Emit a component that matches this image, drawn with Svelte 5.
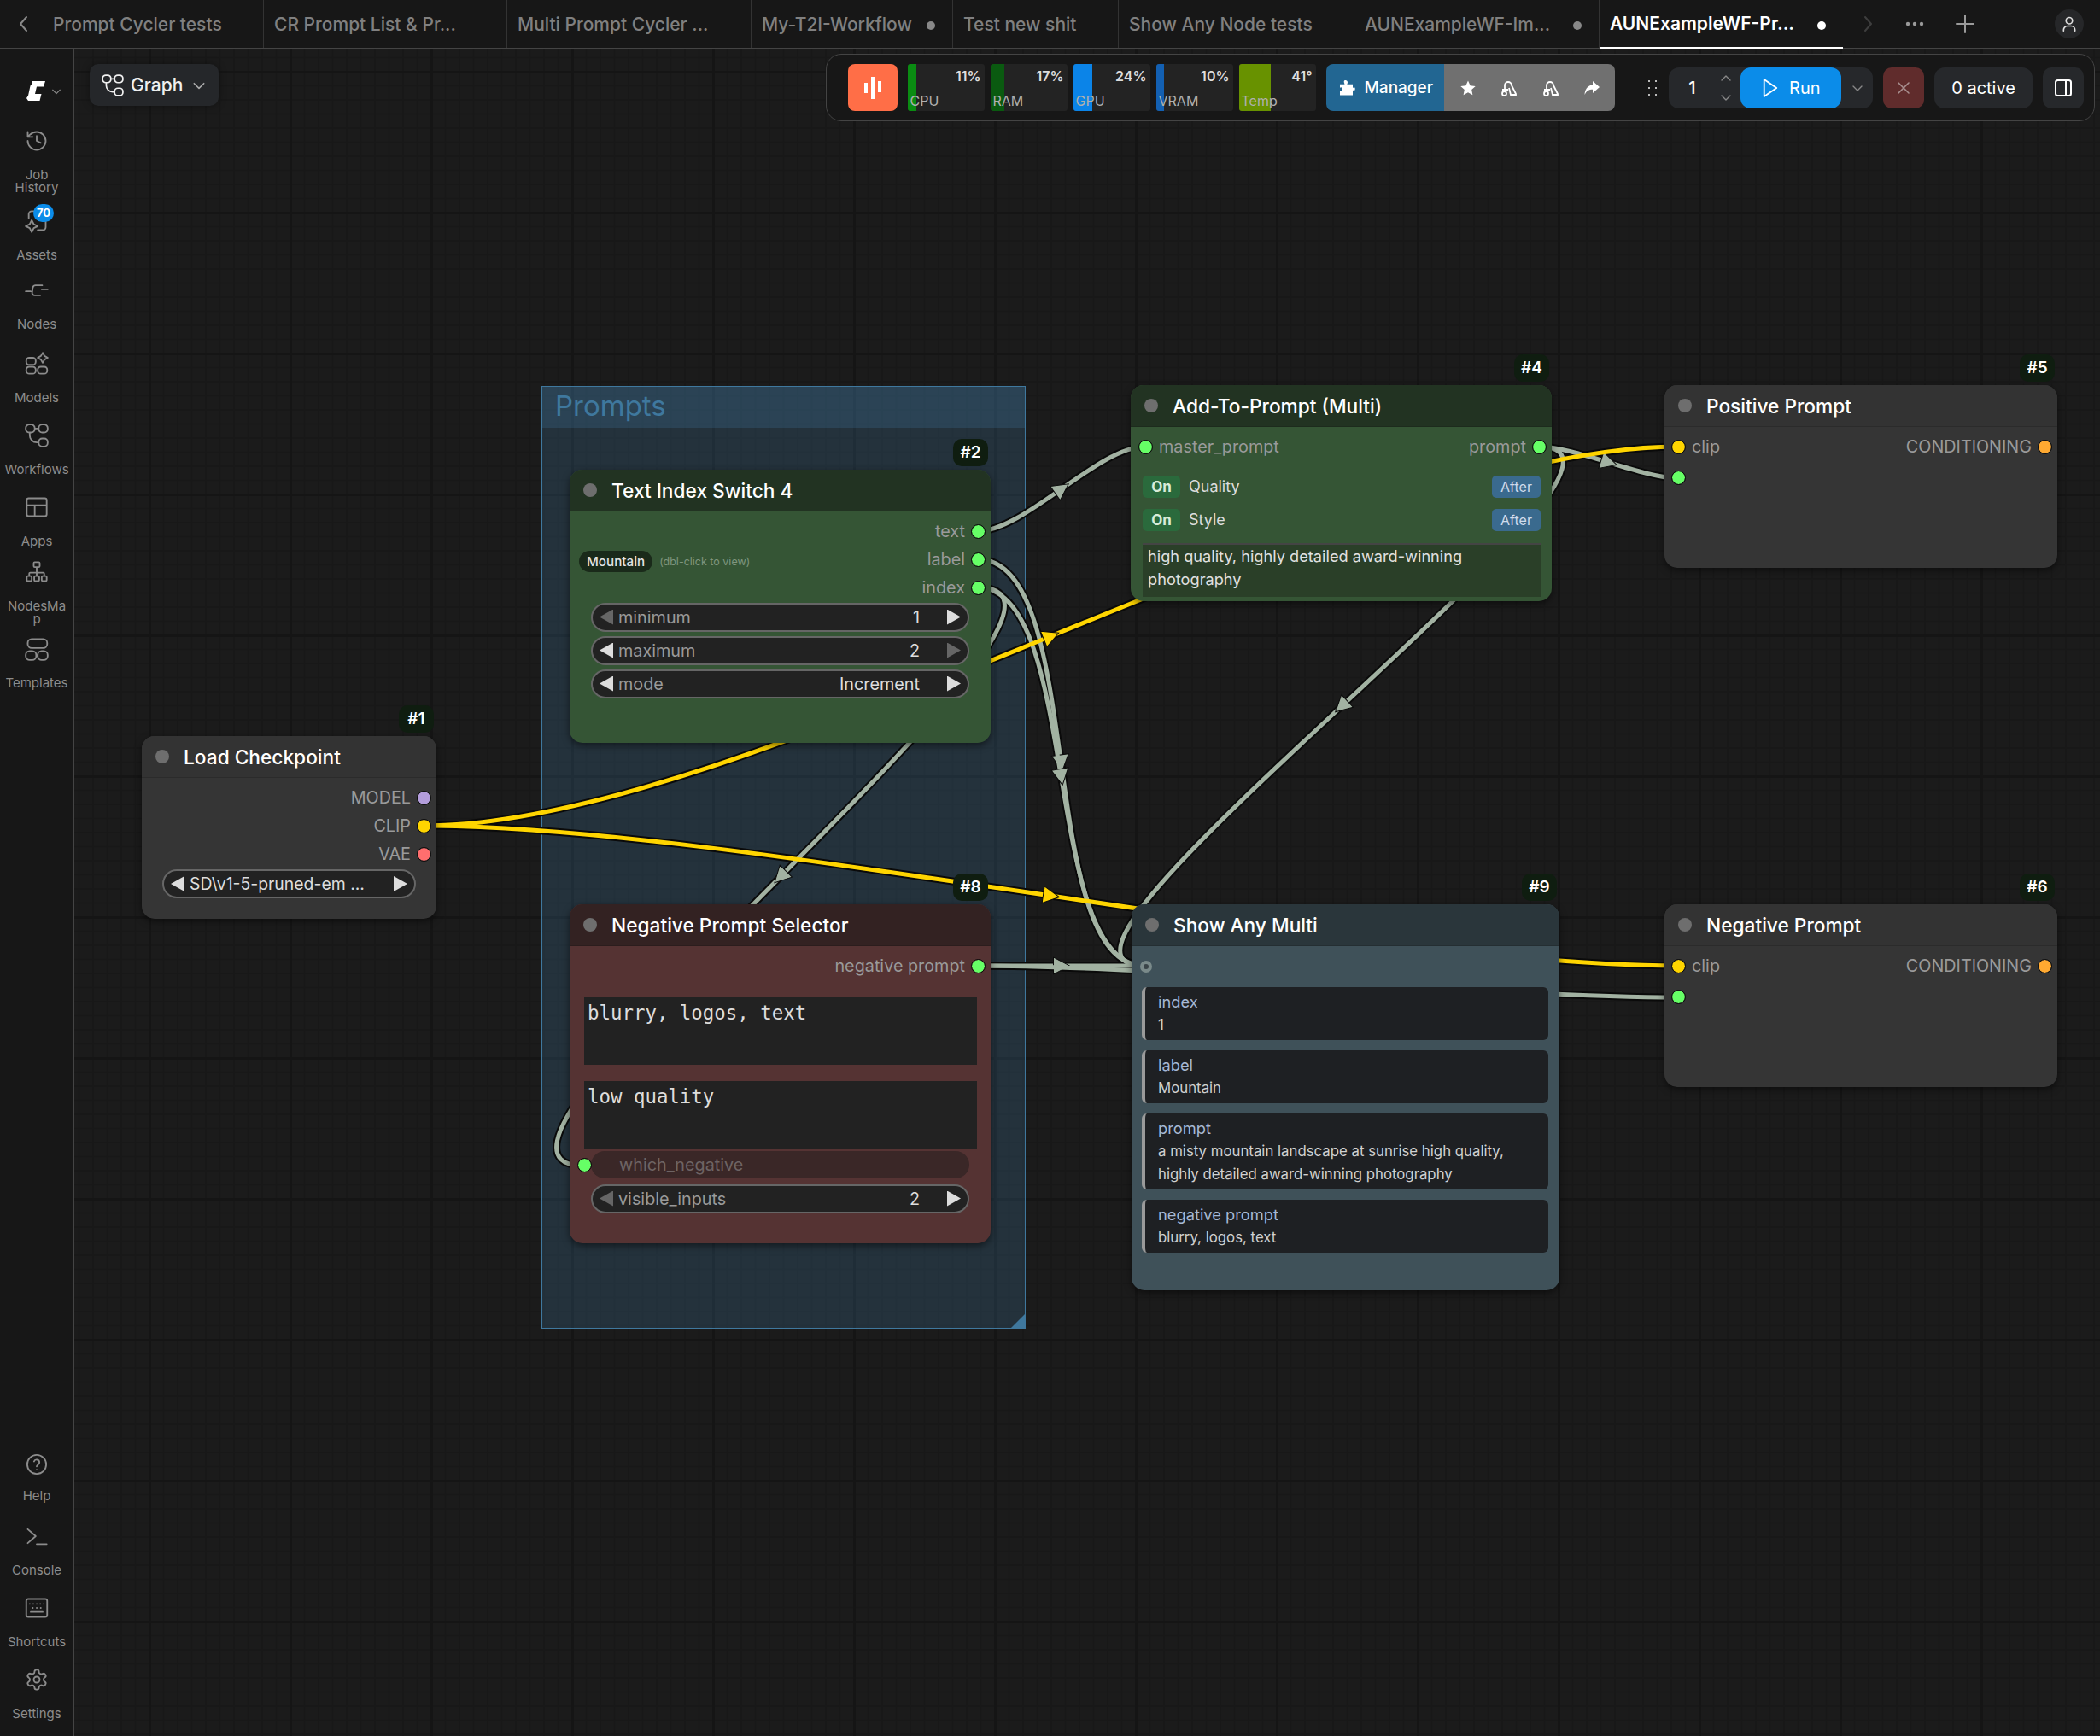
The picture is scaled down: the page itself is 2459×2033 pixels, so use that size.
<script lang="ts">
  // rounded rect as path data, so every icon can be one d string
  const rr = (x: number, y: number, w: number, h: number, r: number) =>
    `M${x + r} ${y}h${w - 2 * r}a${r} ${r} 0 0 1 ${r} ${r}v${h - 2 * r}a${r} ${r} 0 0 1 -${r} ${r}h-${w - 2 * r}a${r} ${r} 0 0 1 -${r} -${r}v-${h - 2 * r}a${r} ${r} 0 0 1 ${r} -${r}z`;

  const icons: Record<string, string> = {
    history: 'M3 12a9 9 0 1 0 9-9 9.75 9.75 0 0 0-6.74 2.74L3 8M3 3v5h5M12 7v5l4 2',
    assets: 'M4 9V5a3 3 0 0 1 3-3h11a3 3 0 0 1 3 3v13a3 3 0 0 1-3 3h-5M7 11l2 4 4 2-4 2-2 4-2-4-4-2 4-2z',
    nodes: 'M1 13h5M17 11h6M17.5 7H11a3 3 0 0 0-3 2.5l-.6 4.5a2.6 2.6 0 0 0 2.6 3h5.5',
    models: rr(1.5, 15, 9.5, 7, 3) + rr(13, 15, 9.5, 7, 3) + rr(1.5, 6, 9.5, 7, 3) + 'M18 1l1.8 3.2 3.2 1.800-3.200 1.800-1.800 3.200-1.800-3.200-3.200-1.800 3.200-1.800z',
    workflows: rr(1, 1, 9, 8, 3.5) + rr(14, 1, 9, 8, 3.5) + rr(14, 15, 9, 8, 3.5) + 'M10 5h4M5 9v3a7 7 0 0 0 7 7h2',
    apps: rr(2, 3, 20, 18, 2) + 'M2 10h20M10 10v11',
    network: rr(9, 2, 6, 5, 1) + rr(2, 16, 5, 5, 1) + rr(9.5, 16, 5, 5, 1) + rr(17, 16, 5, 5, 1) + 'M12 7v9M4.5 16v-2.5a1 1 0 0 1 1-1h13a1 1 0 0 1 1 1V16',
    templates: rr(3, 2, 19.5, 9, 4) + rr(1, 14, 10.5, 9, 4) + rr(13, 14, 10, 9, 4),
    help: 'M21.5 12a9.5 9.5 0 1 1-19 0 9.5 9.5 0 0 1 19 0zM9.3 9a2.8 2.8 0 0 1 5.4 1c0 1.9-2.7 2.6-2.7 4M12 17.2v.1',
    console: 'M3 5l8 7-8 7M12 20h10',
    keyboard: rr(1.5, 3, 21, 18, 2) + 'M5 8h.1M8.5 8h.1M12 8h.1M15.5 8h.1M19 8h.1M8 12h.1M12 12h.1M16 12h.1M6 16h12',
    settings: 'M12.22 2h-.44a2 2 0 0 0-2 2v.18a2 2 0 0 1-1 1.73l-.43.25a2 2 0 0 1-2 0l-.15-.08a2 2 0 0 0-2.73.73l-.22.38a2 2 0 0 0 .73 2.73l.15.1a2 2 0 0 1 1 1.72v.51a2 2 0 0 1-1 1.74l-.15.09a2 2 0 0 0-.73 2.73l.22.38a2 2 0 0 0 2.73.73l.15-.08a2 2 0 0 1 2 0l.43.25a2 2 0 0 1 1 1.73V20a2 2 0 0 0 2 2h.44a2 2 0 0 0 2-2v-.18a2 2 0 0 1 1-1.73l.43-.25a2 2 0 0 1 2 0l.15.08a2 2 0 0 0 2.73-.73l.22-.39a2 2 0 0 0-.73-2.73l-.15-.08a2 2 0 0 1-1-1.74v-.5a2 2 0 0 1 1-1.74l.15-.09a2 2 0 0 0 .73-2.73l-.22-.38a2 2 0 0 0-2.73-.73l-.15.08a2 2 0 0 1-2 0l-.43-.25a2 2 0 0 1-1-1.73V4a2 2 0 0 0-2-2zM15 12a3 3 0 1 1-6 0 3 3 0 0 1 6 0z',
  };

  const tabs = [
    { name: 'Prompt Cycler tests', w: 259 },
    { name: 'CR Prompt List & Pr...', w: 285 },
    { name: 'Multi Prompt Cycler ...', w: 286 },
    { name: 'My-T2I-Workflow', w: 236, dirty: true },
    { name: 'Test new shit', w: 194 },
    { name: 'Show Any Node tests', w: 276 },
    { name: 'AUNExampleWF-Im...', w: 287, dirty: true },
    { name: 'AUNExampleWF-Pr...', w: 285, dirty: true, active: true },
  ];

  const sideTop = [
    { icon: 'history', lines: ['Job', 'History'], h: 94 },
    { icon: 'assets', lines: ['Assets'], h: 81, badge: '70' },
    { icon: 'nodes', lines: ['Nodes'], h: 86 },
    { icon: 'models', lines: ['Models'], h: 84 },
    { icon: 'workflows', lines: ['Workflows'], h: 84 },
    { icon: 'apps', lines: ['Apps'], h: 76 },
    { icon: 'network', lines: ['NodesMa', 'p'], h: 90 },
    { icon: 'templates', lines: ['Templates'], h: 84 },
  ];
  const sideBottom = [
    { icon: 'help', lines: ['Help'], lift: true },
    { icon: 'console', lines: ['Console'] },
    { icon: 'keyboard', lines: ['Shortcuts'] },
    { icon: 'settings', lines: ['Settings'] },
  ];

  const meters = [
    { label: 'CPU', value: '11%', fill: 10, color: '#0a8c12' },
    { label: 'RAM', value: '17%', fill: 16, color: '#0a5a10' },
    { label: 'GPU', value: '24%', fill: 22, color: '#0b84e8' },
    { label: 'VRAM', value: '10%', fill: 9, color: '#1360b2' },
    { label: 'Temp', value: '41°', fill: 37, color: '#689200' },
  ];

  const GRAY = '#a2b2a2';
  const YELLOW = '#ffd500';

  // start, end of every wire, in page coordinates
  const wires = [
    { a: [1145, 622], b: [1341, 523], c: GRAY },
    { a: [1145, 655], b: [1340, 1131], c: GRAY },
    { a: [1145, 688], b: [1340, 1131], c: GRAY },
    { a: [1145, 688], b: [683, 1365], c: GRAY },
    { a: [1802, 523], b: [1340, 1131], c: GRAY },
    { a: [1802, 523], b: [1965, 560], c: GRAY },
    { a: [1145, 1131], b: [1340, 1131], c: GRAY },
    { a: [1145, 1131], b: [1965, 1168], c: GRAY },
    { a: [496, 967], b: [1965, 523], c: YELLOW },
    { a: [496, 967], b: [1965, 1131], c: YELLOW },
  ].map(({ a, b, c }) => {
    const d = Math.hypot(b[0] - a[0], b[1] - a[1]) * 0.25;
    const p1 = [a[0] + d, a[1]];
    const p2 = [b[0] - d, b[1]];
    const mx = (a[0] + 3 * p1[0] + 3 * p2[0] + b[0]) / 8;
    const my = (a[1] + 3 * p1[1] + 3 * p2[1] + b[1]) / 8;
    const tx = b[0] + p2[0] - a[0] - p1[0];
    const ty = b[1] + p2[1] - a[1] - p1[1];
    return {
      d: `M${a[0]} ${a[1]}C${p1[0]} ${p1[1]} ${p2[0]} ${p2[1]} ${b[0]} ${b[1]}`,
      c,
      arrow: `translate(${mx} ${my}) rotate(${(Math.atan2(ty, tx) * 180) / Math.PI})`,
    };
  });

  const ORIGIN_X = 87;
  const ORIGIN_Y = 57;
  const box = (x: number, y: number, w: number, h: number) =>
    `left:${x - ORIGIN_X}px;top:${y - ORIGIN_Y}px;width:${w}px;height:${h}px`;

  const cards = [
    { label: 'index', lines: ['1'] },
    { label: 'label', lines: ['Mountain'] },
    { label: 'prompt', lines: ['a misty mountain landscape at sunrise high quality,', 'highly detailed award-winning photography'] },
    { label: 'negative prompt', lines: ['blurry, logos, text'] },
  ];
</script>

{#snippet icon(name: string, size = 28)}
  <svg class="ico" width={size} height={size} viewBox="0 0 24 24" fill="none" stroke="currentColor" stroke-width="1.6" stroke-linecap="round" stroke-linejoin="round">
    <path d={icons[name]} />
  </svg>
{/snippet}

{#snippet chev(dir: string, size = 14)}
  <svg class="chev {dir}" width={size} height={size} viewBox="0 0 14 14" fill="none" stroke="currentColor" stroke-width="1.4" stroke-linecap="round" stroke-linejoin="round">
    <path d="M2 5l5 5 5-5" />
  </svg>
{/snippet}

{#snippet sideItem(item: any)}
  <div class="side-item" style={item.h ? `height:${item.h}px` : ''}>
    <div class="side-icon">
      {@render icon(item.icon)}
      {#if item.badge}<span class="side-badge">{item.badge}</span>{/if}
    </div>
    <div class="side-label" class:lift={item.lift}>
      {#each item.lines as line}<div>{line}</div>{/each}
    </div>
  </div>
{/snippet}

{#snippet spinner(name: string, value: string, leftOff = false, rightOff = false)}
  <div class="widget">
    <span class="tri left" class:off={leftOff}></span>
    <span class="w-name">{name}</span>
    <span class="w-value">{value}</span>
    <span class="tri right" class:off={rightOff}></span>
  </div>
{/snippet}

{#snippet title(text: string, id: string)}
  <div class="node-title">
    <span class="mode-dot"></span>
    <span>{text}</span>
  </div>
  <span class="node-id">{id}</span>
{/snippet}

<div class="shell">
  <header class="tabbar">
    <div class="tab-nav">
      <svg width="16" height="22" viewBox="0 0 16 22" fill="none" stroke="#8a8a8a" stroke-width="2" stroke-linecap="round" stroke-linejoin="round"><path d="M11 3L4 11l7 8" /></svg>
    </div>
    {#each tabs as tab}
      <div class="tab" class:active={tab.active} style="width:{tab.w}px">
        <span class="tab-name">{tab.name}</span>
        {#if tab.dirty}<span class="tab-dot"></span>{/if}
      </div>
    {/each}
    <div class="tab-tools">
      <svg width="16" height="22" viewBox="0 0 16 22" fill="none" stroke="#3e3e3e" stroke-width="2" stroke-linecap="round" stroke-linejoin="round"><path d="M5 3l7 8-7 8" /></svg>
      <svg width="24" height="8" viewBox="0 0 24 8" fill="#9a9a9a"><circle cx="4" cy="4" r="2.2" /><circle cx="12" cy="4" r="2.2" /><circle cx="20" cy="4" r="2.2" /></svg>
      <svg width="24" height="24" viewBox="0 0 24 24" stroke="#9a9a9a" stroke-width="2" stroke-linecap="round"><path d="M12 2v20M2 12h20" /></svg>
      <div class="avatar">
        <svg width="20" height="20" viewBox="0 0 24 24" fill="none" stroke="#ddd" stroke-width="2" stroke-linecap="round"><circle cx="12" cy="7.5" r="4.5" /><path d="M4 22v-1.5A5.5 5.5 0 0 1 9.5 15h5a5.5 5.5 0 0 1 5.5 5.5V22" /></svg>
      </div>
    </div>
  </header>

  <div class="main">
    <aside class="sidebar">
      <div class="logo-row">
        <svg width="24" height="25" viewBox="0 0 24 25" fill="#fff"><path d="M8 1h15l-2 6.500h-8L11 16h7.500L16.500 24H3L1 21l2-3 2.500-11.500L8 3.500z" /></svg>
        {@render chev('down', 12)}
      </div>
      {#each sideTop as item}
        {@render sideItem(item)}
      {/each}
      <div class="side-bottom">
        {#each sideBottom as item}
          {@render sideItem(item)}
        {/each}
      </div>
    </aside>

    <section class="canvas">
      <div class="graph-btn">
        <span class="graph-ico">{@render icon('workflows', 26)}</span>
        <span>Graph</span>
        {@render chev('down', 16)}
      </div>

      <div class="toolbar">
        <div class="pulse">
          <svg width="22" height="28" viewBox="0 0 22 28" fill="#fff"><rect x="1" y="8" width="4" height="12" /><rect x="9" y="1" width="4" height="26" /><rect x="17" y="6" width="4" height="13" /></svg>
        </div>
        <div class="meters">
          {#each meters as m}
            <div class="meter">
              <div class="meter-fill" style="width:{m.fill}px;background:{m.color}"></div>
              <span class="meter-value">{m.value}</span>
              <span class="meter-label">{m.label}</span>
            </div>
          {/each}
        </div>
        <div class="manager">
          <div class="mgr-main">
            <svg width="20" height="20" viewBox="0 0 20 20" fill="#fff"><path d="M7 1.5c2-1 4 0 4 2 0 1-.6 1.5-.6 2.2H17v4.2c.8-.6 1.200-.9 2-.6 1 .5 1 3 0 3.700-.8.500-1.200.1-2-.4v5.900H2v-5.500c1 .6 2 .6 2.600-.2.800-1.200 0-3.600-1.300-3.600-.5 0-.9.300-1.300.6V5.700h5.500c0-.8-1.500-2.700-.5-4.200z" /></svg>
            <span>Manager</span>
          </div>
          <div class="mgr-tools">
            <svg width="20" height="20" viewBox="0 0 20 20" fill="#fff"><path d="M10 1.500l2.600 5.700 6.100.7-4.500 4.200 1.200 6.100-5.400-3-5.400 3 1.200-6.100L1.300 7.900l6.100-.7z" /></svg>
            {#each [0, 1] as _}
              <svg width="22" height="22" viewBox="0 0 22 22" fill="none" stroke="#fff" stroke-width="1.8"><path d="M6 14V8a4 4 0 0 1 8 0l5 10v1h-6l-2-8" /><circle cx="5.500" cy="17.500" r="2.500" /><path d="M3 13h7" /></svg>
            {/each}
            <svg width="20" height="20" viewBox="0 0 20 20" fill="#fff"><path d="M11 2l8 7-8 7v-4.200C6.500 11.800 3.800 13.500 1.500 18c.3-6.500 3.500-11 9.500-11.500z" /></svg>
          </div>
        </div>
        <div class="grip">
          {#each Array(6) as _}<span></span>{/each}
        </div>
        <div class="queue">
          <span class="q-count">1</span>
          <div class="q-steps">
            {@render chev('up', 14)}
            {@render chev('down', 14)}
          </div>
          <div class="run">
            <svg width="20" height="24" viewBox="0 0 22 26" fill="none" stroke="#fff" stroke-width="2" stroke-linejoin="round"><path d="M3 2l16 11L3 24z" /></svg>
            <span>Run</span>
          </div>
          <span class="q-menu">{@render chev('down', 14)}</span>
        </div>
        <div class="stop">
          <svg width="18" height="18" viewBox="0 0 18 18" stroke="#a89090" stroke-width="1.6" stroke-linecap="round"><path d="M3 3l12 12M15 3L3 15" /></svg>
        </div>
        <div class="active-count">0 active</div>
        <div class="panel-btn">
          <svg width="22" height="24" viewBox="0 0 22 24" fill="none" stroke="#fff" stroke-width="2"><rect x="2" y="3" width="18" height="18" rx="2.500" /><path d="M14 3v18" /></svg>
        </div>
      </div>

      <div class="group" style={box(634, 452, 567, 1104)}>
        <div class="group-title">Prompts</div>
        <span class="group-corner"></span>
      </div>

      <svg class="wires" width="2459" height="2033" viewBox="0 0 2459 2033" fill="none">
        {#each wires as w}
          <path d={w.d} stroke="#0a0a0a" stroke-width="9" />
        {/each}
        {#each wires as w}
          <path d={w.d} stroke={w.c} stroke-width="5" />
          <path d="M-9 -10L10 0L-9 10z" fill={w.c} stroke="#0a0a0a" stroke-width="1" transform={w.arrow} />
        {/each}
      </svg>

      <!-- Load Checkpoint -->
      <div class="node gray" style={box(166, 862, 345, 214)}>
        {@render title('Load Checkpoint', '#1')}
        <div class="node-body">
          <div class="slot out"><span>MODEL</span><i class="dot" style="--c:#b39ddb"></i></div>
          <div class="slot out"><span>CLIP</span><i class="dot" style="--c:#ffd500"></i></div>
          <div class="slot out"><span>VAE</span><i class="dot" style="--c:#ff6e6e"></i></div>
          <div class="widget ckpt">
            <span class="tri left"></span>
            <span class="w-text">SD\v1-5-pruned-em ...</span>
            <span class="tri right"></span>
          </div>
        </div>
      </div>

      <!-- Text Index Switch 4 -->
      <div class="node green" style={box(667, 550, 493, 320)}>
        {@render title('Text Index Switch 4', '#2')}
        <div class="node-body">
          <div class="slot out"><span>text</span><i class="dot" style="--c:#6f6"></i></div>
          <div class="slot out">
            <div class="pill-row"><span class="pill">Mountain</span><span class="hint">(dbl-click to view)</span></div>
            <span>label</span><i class="dot" style="--c:#6f6"></i>
          </div>
          <div class="slot out"><span>index</span><i class="dot" style="--c:#6f6"></i></div>
          <div class="widgets">
            {@render spinner('minimum', '1', true)}
            {@render spinner('maximum', '2', false, true)}
            {@render spinner('mode', 'Increment')}
          </div>
        </div>
      </div>

      <!-- Add-To-Prompt (Multi) -->
      <div class="node green" style={box(1324, 451, 493, 253)}>
        {@render title('Add-To-Prompt (Multi)', '#4')}
        <div class="node-body">
          <div class="slot both">
            <i class="dot" style="--c:#6f6"></i><span class="grow">master_prompt</span>
            <span>prompt</span><i class="dot" style="--c:#6f6"></i>
          </div>
          <div class="toggles">
            {#each ['Quality', 'Style'] as name}
              <div class="toggle-row">
                <span class="on">On</span>
                <span class="toggle-name">{name}</span>
                <span class="after">After</span>
              </div>
            {/each}
          </div>
          <div class="preview">high quality, highly detailed award-winning photography</div>
        </div>
      </div>

      <!-- Positive Prompt -->
      <div class="node gray" style={box(1949, 451, 460, 214)}>
        {@render title('Positive Prompt', '#5')}
        <div class="node-body">
          <div class="slot both wide">
            <i class="dot" style="--c:#ffd500"></i><span class="grow">clip</span>
            <span>CONDITIONING</span><i class="dot" style="--c:#ffa931"></i>
          </div>
          <div class="slot both wide second"><i class="dot" style="--c:#6f6"></i></div>
        </div>
      </div>

      <!-- Negative Prompt Selector -->
      <div class="node red" style={box(667, 1059, 493, 397)}>
        {@render title('Negative Prompt Selector', '#8')}
        <div class="node-body">
          <div class="slot out"><span>negative prompt</span><i class="dot" style="--c:#6f6"></i></div>
          <div class="textbox first">blurry, logos, text</div>
          <div class="textbox">low quality</div>
          <div class="linked">
            <i class="dot on-edge" style="--c:#6f6"></i>
            <span>which_negative</span>
          </div>
          <div class="widgets tight">
            {@render spinner('visible_inputs', '2', true)}
          </div>
        </div>
      </div>

      <!-- Show Any Multi -->
      <div class="node slate" style={box(1325, 1059, 501, 452)}>
        {@render title('Show Any Multi', '#9')}
        <div class="node-body">
          <div class="slot both hollow"><i class="ring"></i></div>
          <div class="cards">
            {#each cards as card}
              <div class="card">
                <div class="card-label">{card.label}</div>
                {#each card.lines as line}<div class="card-line">{line}</div>{/each}
              </div>
            {/each}
          </div>
        </div>
      </div>

      <!-- Negative Prompt -->
      <div class="node gray" style={box(1949, 1059, 460, 214)}>
        {@render title('Negative Prompt', '#6')}
        <div class="node-body">
          <div class="slot both wide">
            <i class="dot" style="--c:#ffd500"></i><span class="grow">clip</span>
            <span>CONDITIONING</span><i class="dot" style="--c:#ffa931"></i>
          </div>
          <div class="slot both wide second"><i class="dot" style="--c:#6f6"></i></div>
        </div>
      </div>
    </section>
  </div>
</div>

<style>
  :global(body) {
    margin: 0;
    background: #171717;
  }

  .shell {
    width: 2459px;
    height: 2033px;
    display: flex;
    flex-direction: column;
    overflow: hidden;
    font-family: Inter, "Liberation Sans", sans-serif;
    color: #ddd;
  }

  /* tabs */
  .tabbar {
    height: 56px;
    flex: none;
    display: flex;
    background: #171717;
    border-bottom: 1px solid #444;
  }
  .tab-nav {
    width: 50px;
    flex: none;
    display: flex;
    align-items: center;
    padding-left: 20px;
    box-sizing: border-box;
  }
  .tab {
    flex: none;
    box-sizing: border-box;
    display: flex;
    align-items: center;
    justify-content: space-between;
    padding: 0 20px 0 12px;
    border-right: 1px solid #333;
    color: #808080;
    font-size: 21px;
    font-weight: 500;
  }
  .tab.active {
    color: #fff;
    font-weight: 600;
    border-right: none;
    border-bottom: 2px solid #fff;
    margin-bottom: -1px;
  }
  .tab-dot {
    width: 10px;
    height: 10px;
    border-radius: 50%;
    background: #888;
    margin-top: 4px;
  }
  .tab.active .tab-dot {
    background: #fff;
  }
  .tab-tools {
    flex: 1;
    display: flex;
    align-items: center;
    gap: 35px;
    padding-left: 21px;
  }
  .avatar {
    width: 34px;
    height: 34px;
    margin-left: 58px;
    border-radius: 50%;
    background: #262729;
    display: flex;
    align-items: center;
    justify-content: center;
  }

  .main {
    flex: 1;
    display: flex;
    min-height: 0;
  }

  /* sidebar */
  .sidebar {
    width: 87px;
    flex: none;
    box-sizing: border-box;
    display: flex;
    flex-direction: column;
    background: #171717;
    border-right: 1px solid #444;
    overflow: hidden;
  }
  .logo-row {
    height: 94px;
    flex: none;
    box-sizing: border-box;
    padding: 37px 0 0 30px;
    display: flex;
    align-items: flex-start;
    gap: 6px;
    color: #888;
  }
  .logo-row .chev {
    margin-top: 7px;
  }
  .side-item {
    flex: none;
    height: 84px;
    display: flex;
    flex-direction: column;
    align-items: center;
    color: #8c8c8c;
  }
  .side-icon {
    position: relative;
    height: 28px;
  }
  .ico {
    display: block;
  }
  .side-badge {
    position: absolute;
    left: 10px;
    top: -6px;
    width: 24px;
    height: 21px;
    border-radius: 11px;
    background: #0b8ce9;
    color: #fff;
    font-size: 13px;
    font-weight: 700;
    line-height: 21px;
    text-align: center;
  }
  .side-label {
    margin-top: 18px;
    width: 84px;
    text-align: center;
    font-size: 15px;
    line-height: 15px;
  }
  .side-label.lift {
    margin-top: 15px;
  }
  .side-bottom {
    margin-top: auto;
    margin-bottom: -4px;
  }

  /* canvas */
  .canvas {
    position: relative;
    flex: 1;
    overflow: hidden;
    background-color: #1b1b1b;
    background-image:
      linear-gradient(to right, #151515 3px, transparent 3px),
      linear-gradient(to bottom, #151515 3px, transparent 3px),
      linear-gradient(to right, #181818 2px, transparent 2px),
      linear-gradient(to bottom, #181818 2px, transparent 2px);
    background-size: 165px 165px, 165px 165px, 16.5px 16.5px, 16.5px 16.5px;
    background-position: 87px 26px, 87px 26px, 87px 26px, 87px 26px;
  }
  .wires {
    position: absolute;
    left: -87px;
    top: -57px;
    pointer-events: none;
  }

  .graph-btn {
    position: absolute;
    left: 18px;
    top: 18px;
    box-sizing: border-box;
    width: 151px;
    height: 49px;
    display: flex;
    align-items: center;
    gap: 8px;
    padding-left: 14px;
    border-radius: 10px;
    background: #25272a;
    box-shadow: 0 0 10px rgba(0, 0, 0, 0.35);
    color: #f0f0f0;
    font-size: 21px;
    font-weight: 500;
  }
  .graph-ico {
    display: block;
    margin-top: 1px;
  }
  .graph-btn .chev {
    color: #aaa;
    margin-left: 3px;
  }

  /* toolbar */
  .toolbar {
    position: absolute;
    left: 880px;
    top: 6px;
    box-sizing: border-box;
    width: 1486px;
    height: 79px;
    display: flex;
    align-items: center;
    padding: 0 12px 0 24.500px;
    background: #171717;
    border: 1.5px solid #444;
    border-radius: 18px;
  }
  .pulse {
    width: 58px;
    height: 55px;
    flex: none;
    border-radius: 8px;
    background: #ff6e47;
    display: flex;
    align-items: center;
    justify-content: center;
  }
  .meters {
    margin-left: 12px;
    display: flex;
    gap: 7px;
  }
  .meter {
    position: relative;
    width: 90px;
    height: 55px;
    background: #232323;
    border-radius: 3px;
    overflow: hidden;
    font-size: 16px;
  }
  .meter-fill {
    position: absolute;
    inset: 0 auto 0 0;
  }
  .meter-value {
    position: absolute;
    right: 4px;
    top: 4px;
    font-weight: 600;
    color: #ddd;
    line-height: 20px;
  }
  .meter-label {
    position: absolute;
    left: 3px;
    bottom: 2px;
    color: #b0b0b0;
    line-height: 20px;
  }
  .manager {
    margin-left: 12px;
    display: flex;
    height: 55px;
    border-radius: 8px;
    overflow: hidden;
    color: #fff;
    font-size: 19px;
    font-weight: 500;
  }
  .mgr-main {
    width: 139px;
    display: flex;
    align-items: center;
    gap: 11px;
    padding-left: 14px;
    box-sizing: border-box;
    background: #226692;
  }
  .mgr-tools {
    width: 200px;
    display: flex;
    align-items: center;
    justify-content: space-around;
    padding: 0 4px;
    box-sizing: border-box;
    background: #707070;
  }
  .grip {
    margin: 0 12px 0 39px;
    width: 12px;
    display: grid;
    grid-template-columns: 2px 2px;
    gap: 6px 6px;
  }
  .grip span {
    width: 2px;
    height: 2px;
    background: #bbb;
  }
  .queue {
    width: 239px;
    height: 48px;
    position: relative;
    display: flex;
    align-items: center;
    border-radius: 12px;
    background: #26282b;
    color: #fff;
  }
  .q-count {
    width: 54px;
    text-align: center;
    font-size: 20px;
    font-weight: 500;
  }
  .q-steps {
    width: 30px;
    padding-right: 4px;
    box-sizing: border-box;
    display: flex;
    flex-direction: column;
    gap: 8px;
    color: #888;
    align-items: center;
  }
  .chev.up {
    transform: rotate(180deg);
  }
  .run {
    width: 118px;
    height: 48px;
    display: flex;
    align-items: center;
    justify-content: center;
    gap: 12px;
    border-radius: 12px;
    background: #0b8ce9;
    font-size: 20px;
    font-weight: 400;
  }
  .q-menu {
    flex: 1;
    display: flex;
    justify-content: center;
    color: #888;
  }
  .stop {
    width: 48px;
    height: 48px;
    margin-left: 12px;
    border-radius: 10px;
    background: #602c2c;
    display: flex;
    align-items: center;
    justify-content: center;
  }
  .active-count {
    width: 115px;
    height: 48px;
    margin-left: 12px;
    border-radius: 12px;
    background: #26282b;
    color: #fff;
    font-size: 20px;
    font-weight: 400;
    line-height: 48px;
    text-align: center;
  }
  .panel-btn {
    width: 48px;
    height: 48px;
    margin-left: 12px;
    border-radius: 10px;
    background: #26282b;
    display: flex;
    align-items: center;
    justify-content: center;
  }

  /* group */
  .group {
    position: absolute;
    box-sizing: border-box;
    background: rgba(63, 120, 158, 0.25);
    border: 1.5px solid #3f789e;
  }
  .group-title {
    height: 48px;
    box-sizing: border-box;
    padding-left: 15px;
    background: rgba(63, 120, 158, 0.25);
    color: #3f789e;
    font-size: 33px;
    line-height: 44px;
  }
  .group-corner {
    position: absolute;
    right: 0;
    bottom: 0;
    width: 16px;
    height: 16px;
    background: #3f789e;
    clip-path: polygon(100% 0, 100% 100%, 0 100%);
  }

  /* nodes */
  .node {
    position: absolute;
    display: flex;
    flex-direction: column;
    border-radius: 15px;
    box-shadow: 0 3px 8px rgba(0, 0, 0, 0.5);
    background: var(--body);
  }
  .gray { --head: #333333; --body: #353535; }
  .green { --head: #223322; --body: #355535; }
  .red { --head: #332222; --body: #553333; }
  .slate { --head: #2a363b; --body: #3f5159; }

  .node-title {
    height: 49px;
    flex: none;
    box-sizing: border-box;
    display: flex;
    align-items: center;
    gap: 17px;
    padding-left: 16px;
    border-radius: 15px 15px 0 0;
    background: var(--head);
    border-bottom: 1px solid rgba(0, 0, 0, 0.14);
    color: #fff;
    font-size: 22.700px;
    font-weight: 500;
  }
  .mode-dot {
    width: 16px;
    height: 16px;
    border-radius: 50%;
    background: #6e6e6e;
  }
  .node-id {
    position: absolute;
    right: 3px;
    top: -36px;
    width: 41px;
    height: 32px;
    border-radius: 10px;
    background: #0f1d10;
    color: #fff;
    font-size: 19px;
    font-weight: 600;
    line-height: 32px;
    text-align: center;
  }
  .node-body {
    padding-top: 7px;
    font-size: 19.800px;
    color: #9a9a9a;
  }
  .slot {
    height: 33px;
    display: flex;
    align-items: center;
    gap: 8px;
    line-height: 33px;
  }
  .slot.out {
    justify-content: flex-end;
    padding-right: 7px;
  }
  .slot.both {
    padding: 0 7px 0 10px;
  }
  .slot.wide {
    padding-left: 9px;
  }
  .slot.second {
    margin-top: 3px;
  }
  .grow {
    flex: 1;
  }
  .dot {
    flex: none;
    display: block;
    width: 15px;
    height: 15px;
    box-sizing: border-box;
    border-radius: 50%;
    background: var(--c);
    outline: 1.5px solid #0a0a0a;
  }
  .pill-row {
    flex: 1;
    display: flex;
    align-items: center;
    gap: 8px;
    padding-left: 11px;
    margin-top: 3px;
  }
  .pill {
    height: 25px;
    padding: 0 9px;
    border-radius: 13px;
    background: #1a2a1a;
    color: #e4e4e4;
    font-size: 15.200px;
    font-weight: 500;
    line-height: 25px;
  }
  .hint {
    color: #7f957f;
    font-size: 12.500px;
  }

  .widgets {
    margin: 0.5px 0 0 25px;
    width: 443px;
    display: flex;
    flex-direction: column;
    gap: 5px;
  }
  .widgets.tight {
    margin-top: 7px;
  }
  .widget {
    box-sizing: border-box;
    height: 34px;
    display: flex;
    align-items: center;
    padding: 0 8px;
    border-radius: 17px;
    background: #222;
    border: 2px solid #666;
  }
  .widget.ckpt {
    margin: 1px 0 0 24px;
    width: 297px;
    color: #ddd;
  }
  .w-text {
    flex: 1;
    margin-left: 6px;
    font-size: 19.400px;
    white-space: nowrap;
  }
  .w-name {
    flex: 1;
    margin-left: 6px;
    color: #999;
  }
  .w-value {
    margin-right: 32px;
    color: #ddd;
  }
  .tri {
    width: 16px;
    height: 18px;
    flex: none;
    background: #ddd;
  }
  .tri.left {
    clip-path: polygon(100% 0, 100% 100%, 0 50%);
  }
  .tri.right {
    clip-path: polygon(0 0, 100% 50%, 0 100%);
  }
  .tri.off {
    background: #666;
  }

  /* add-to-prompt */
  .toggles {
    margin: 16.500px 13px 0 14px;
    display: flex;
    flex-direction: column;
    gap: 13px;
  }
  .toggle-row {
    height: 26px;
    display: flex;
    align-items: center;
    color: #ddd;
    font-size: 18px;
  }
  .on {
    width: 44px;
    height: 26px;
    border-radius: 5px;
    background: #2a6a3c;
    color: #d8ecd8;
    font-size: 17px;
    font-weight: 700;
    line-height: 26px;
    text-align: center;
  }
  .toggle-name {
    flex: 1;
    margin-left: 10px;
  }
  .after {
    width: 57px;
    height: 26px;
    border-radius: 5px;
    background: #3a6a8e;
    color: #cfdcec;
    font-size: 16px;
    line-height: 26px;
    text-align: center;
  }
  .preview {
    margin: 14px 13px 0 14px;
    box-sizing: border-box;
    height: 63px;
    padding: 0.5px 6px;
    background: #2a3f28;
    border-top: 2px solid #444;
    color: #e0e0e0;
    font-size: 18.200px;
    line-height: 27px;
  }

  /* negative selector */
  .textbox {
    margin: 19px 16px 0 17px;
    box-sizing: border-box;
    height: 79px;
    padding: 2px 4px;
    background: #222;
    color: #ddd;
    font-family: "DejaVu Sans Mono", "Liberation Mono", monospace;
    font-size: 22.400px;
    line-height: 32px;
  }
  .textbox.first {
    margin-top: 20px;
  }
  .linked {
    position: relative;
    margin: 2.500px 0 0 25px;
    width: 443px;
    height: 32px;
    border-radius: 16px;
    background: #3a2727;
    color: #6e6464;
    line-height: 32px;
    padding-left: 33px;
    box-sizing: border-box;
  }
  .on-edge {
    position: absolute;
    left: -15px;
    top: 9px;
  }

  /* show any */
  .hollow {
    padding-left: 8px;
  }
  .ring {
    display: block;
    width: 14px;
    height: 14px;
    box-sizing: border-box;
    border-radius: 50%;
    border: 4px solid #7a8a8a;
    background: #3a4448;
  }
  .cards {
    margin: 8px 13px 0 12px;
    display: flex;
    flex-direction: column;
    gap: 12px;
  }
  .card {
    box-sizing: border-box;
    padding: 4px 8px 4px 15px;
    border-radius: 6px;
    border-left: 4px solid #9a9a9a;
    background: #1e2023;
    font-size: 16.800px;
    line-height: 27px;
    color: #d0d0d0;
  }
  .card-label {
    color: #a6b8d4;
    font-size: 18.300px;
  }
</style>
